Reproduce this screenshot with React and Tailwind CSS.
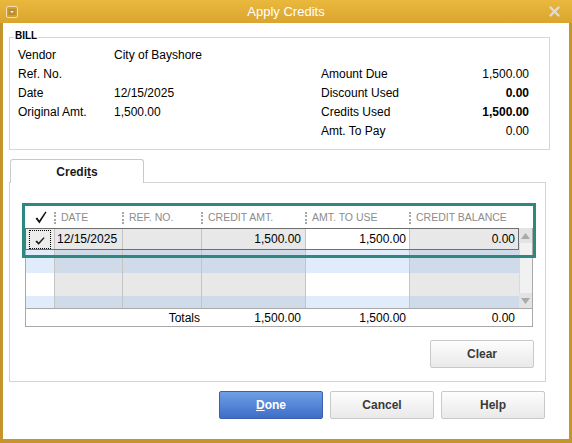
import React from 'react';

function HeaderCheck() {
  return (
    <svg width="12" height="13" viewBox="0 0 12 13">
      <path d="M0.5 7.5 L2.3 6.6 L4.2 9.6 L10.4 0.5 L11.5 1.2 L4.4 12.5 Z" fill="#111" />
    </svg>
  );
}

function SmallCheck() {
  return (
    <svg width="10" height="8" viewBox="0 0 10 8">
      <path d="M0.3 4.4 L2 3.6 L3.6 5.6 L8.6 0.3 L9.6 1 L3.7 7.7 Z" fill="#1a1a1a" />
    </svg>
  );
}

function Sep() {
  return <span className="block h-[12px] w-0 border-l-2 border-dotted border-[#a6a6a6]" />;
}

function HeaderCell({ w, label }) {
  return (
    <div className={`${w} flex items-center h-full`}>
      <Sep />
      <span className="ml-[5px]">{label}</span>
    </div>
  );
}

function EmptyRow({ h, blue }) {
  const light = blue ? 'bg-[#e1ecfa]' : 'bg-white';
  const gray = blue ? 'bg-[#cfdbe8]' : 'bg-[#e8e8e8]';
  return (
    <div className={`${h} flex border-l border-[#a9a9a9]`}>
      <div className={`w-[28px] ${light}`} />
      <div className={`w-[68px] border-l border-[#c4c4c4] ${gray}`} />
      <div className={`w-[79px] border-l border-[#c4c4c4] ${gray}`} />
      <div className={`w-[104px] border-l border-[#c4c4c4] ${gray}`} />
      <div className={`w-[104px] border-l border-[#c4c4c4] ${light}`} />
      <div className={`w-[110px] border-l border-[#c4c4c4] ${gray}`} />
    </div>
  );
}

function Btn({ children, primary }) {
  return (
    <button
      className={
        primary
          ? 'w-[104px] h-[28px] rounded-[2px] border border-[#3a60ad] bg-gradient-to-b from-[#6f9fe4] to-[#3e6dc9] text-white font-bold text-[12px]'
          : 'w-[104px] h-[28px] rounded-[2px] border border-[#c9c9c9] bg-gradient-to-b from-[#fdfdfd] to-[#e9e9e9] text-[#3a3a3a] font-bold text-[12px]'
      }
    >
      {children}
    </button>
  );
}

const billLeft = [
  ['Vendor', 'City of Bayshore'],
  ['Ref. No.', ''],
  ['Date', '12/15/2025'],
  ['Original Amt.', '1,500.00'],
];

const billRight = [
  ['Amount Due', '1,500.00', false],
  ['Discount Used', '0.00', true],
  ['Credits Used', '1,500.00', true],
  ['Amt. To Pay', '0.00', false],
];

export default function App() {
  return (
    <div className="w-[572px] h-[443px] flex flex-col font-['Liberation_Sans',Arial,sans-serif] text-[12px] text-black select-none">
      {/* Title bar */}
      <div className="h-[23px] flex items-center bg-gradient-to-b from-[#ebb83e] to-[#d9a52e]">
        <div className="ml-[6px] mr-[5px] w-[12px] flex">
          <svg width="12" height="12" viewBox="0 0 12 12">
            <rect x="0.5" y="0.5" width="11" height="11" rx="1.5" fill="#cf9f3a" stroke="#f2e0b0" />
            <rect x="2.5" y="3" width="7" height="6" fill="#b98b2c" />
            <path d="M4 5 L8 5 L6 7.2 Z" fill="#f6ead0" />
          </svg>
        </div>
        <div className="flex-1 text-center text-white text-[13px] leading-none">Apply Credits</div>
        <div className="mr-[12px] w-[11px] flex">
          <svg width="11" height="11" viewBox="0 0 11 11">
            <path d="M1.5 1.5 L9.5 9.5 M9.5 1.5 L1.5 9.5" stroke="#e4dccb" strokeWidth="2.4" strokeLinecap="round" />
          </svg>
        </div>
      </div>

      {/* Body */}
      <div className="flex-1 flex flex-col bg-white border-x-[3px] border-b-[4px] border-[#c3952c]">
        {/* BILL group */}
        <div className="relative mt-[14px] ml-[6px] w-[541px] h-[113px] border border-[#d6d6d6]">
          <span className="absolute -top-[9px] left-[4px] px-[1px] bg-white text-[10px] font-bold leading-[14px]">BILL</span>
          <div className="flex justify-between pt-[8px] pl-[8px] pr-[20px] leading-[19px]">
            <div>
              {billLeft.map(([l, v]) => (
                <div key={l} className="flex h-[19px]">
                  <span className="w-[96px]">{l}</span>
                  <span>{v}</span>
                </div>
              ))}
            </div>
            <div className="w-[208px]">
              <div className="h-[19px]" />
              {billRight.map(([l, v, b]) => (
                <div key={l} className="flex h-[19px]">
                  <span className="flex-1">{l}</span>
                  <span className={b ? 'font-bold' : ''}>{v}</span>
                </div>
              ))}
            </div>
          </div>
        </div>

        {/* Tab */}
        <div className="mt-[9px] ml-[7px] relative z-10 -mb-px w-[134px] h-[24px] rounded-t-[3px] border border-b-0 border-[#c9c9c9] bg-white flex items-center justify-center">
          <span className="font-bold text-[12px] text-[#1a1a1a]">
            Credi<span className="underline">t</span>s
          </span>
        </div>

        {/* Panel */}
        <div className="relative ml-[6px] w-[537px] h-[200px] border border-[#d3d3d3] flex flex-col">
          <div className="mt-[24px] ml-[15px] w-[508px]">
            {/* Header */}
            <div className="flex h-[21px] items-center text-[10.5px] text-[#8c8c8c]">
              <div className="w-[29px] flex justify-center pl-[2px]">
                <HeaderCheck />
              </div>
              <HeaderCell w="w-[68px]" label="DATE" />
              <HeaderCell w="w-[79px]" label="REF. NO." />
              <HeaderCell w="w-[104px]" label="CREDIT AMT." />
              <HeaderCell w="w-[104px]" label="AMT. TO USE" />
              <HeaderCell w="w-[110px]" label="CREDIT BALANCE" />
            </div>

            {/* Grid body */}
            <div className="flex h-[80px]">
              <div className="w-[494px] flex flex-col">
                <div className="h-[22px] flex border border-[#6e6e6e] text-[12px]">
                  <div className="w-[28px] bg-[#ececec] flex items-center justify-center">
                    <div className="w-[22px] h-[19px] border border-dotted border-black flex items-center justify-center pt-[3px]">
                      <SmallCheck />
                    </div>
                  </div>
                  <div className="w-[68px] border-l border-[#c4c4c4] bg-[#e8e8e8] flex items-center pl-[2px]">12/15/2025</div>
                  <div className="w-[79px] border-l border-[#c4c4c4] bg-[#e8e8e8]" />
                  <div className="w-[104px] border-l border-[#c4c4c4] bg-[#e8e8e8] flex items-center justify-end pr-[4px]">1,500.00</div>
                  <div className="w-[104px] border-l border-[#c4c4c4] bg-white flex items-center justify-end pr-[3px]">1,500.00</div>
                  <div className="w-[109px] border-l border-[#c4c4c4] bg-[#e8e8e8] flex items-center justify-end pr-[3px]">0.00</div>
                </div>
                <EmptyRow h="h-[23px]" blue />
                <EmptyRow h="h-[23px]" />
                <EmptyRow h="h-[12px]" blue />
              </div>
              {/* Scrollbar */}
              <div className="w-[14px] flex flex-col bg-[#f1f1f1] border-r border-[#a9a9a9]">
                <div className="h-[15px] bg-[#e3e3e3] flex items-center justify-center">
                  <svg width="9" height="6" viewBox="0 0 9 6"><path d="M0 6 L4.5 0 L9 6 Z" fill="#a9a9a9" /></svg>
                </div>
                <div className="flex-1 border-l border-[#dadada]" />
                <div className="h-[15px] bg-[#e3e3e3] flex items-center justify-center">
                  <svg width="9" height="6" viewBox="0 0 9 6"><path d="M0 0 L9 0 L4.5 6 Z" fill="#a9a9a9" /></svg>
                </div>
              </div>
            </div>

            {/* Totals */}
            <div className="h-[19px] flex items-center border border-[#a9a9a9] text-[12px]">
              <div className="w-[175px] text-right pr-[1px]">Totals</div>
              <div className="w-[104px] text-right pr-[4px]">1,500.00</div>
              <div className="w-[104px] text-right pr-[3px]">1,500.00</div>
              <div className="w-[110px] text-right pr-[4px]">0.00</div>
              <div className="w-[13px]" />
            </div>
          </div>

          <div className="mt-[13px] flex justify-end pr-[11px]">
            <Btn>Clear</Btn>
          </div>

          {/* Selection highlight */}
          <div className="absolute left-[12px] top-[20px] w-[514px] h-[55px] border-[3px] border-[#2f8880] pointer-events-none" />
        </div>

        {/* Bottom buttons */}
        <div className="mt-[9px] flex justify-end gap-[7px] pr-[24px]">
          <Btn primary>
            <span className="underline">D</span>one
          </Btn>
          <Btn>Cancel</Btn>
          <Btn>Help</Btn>
        </div>
      </div>
    </div>
  );
}
